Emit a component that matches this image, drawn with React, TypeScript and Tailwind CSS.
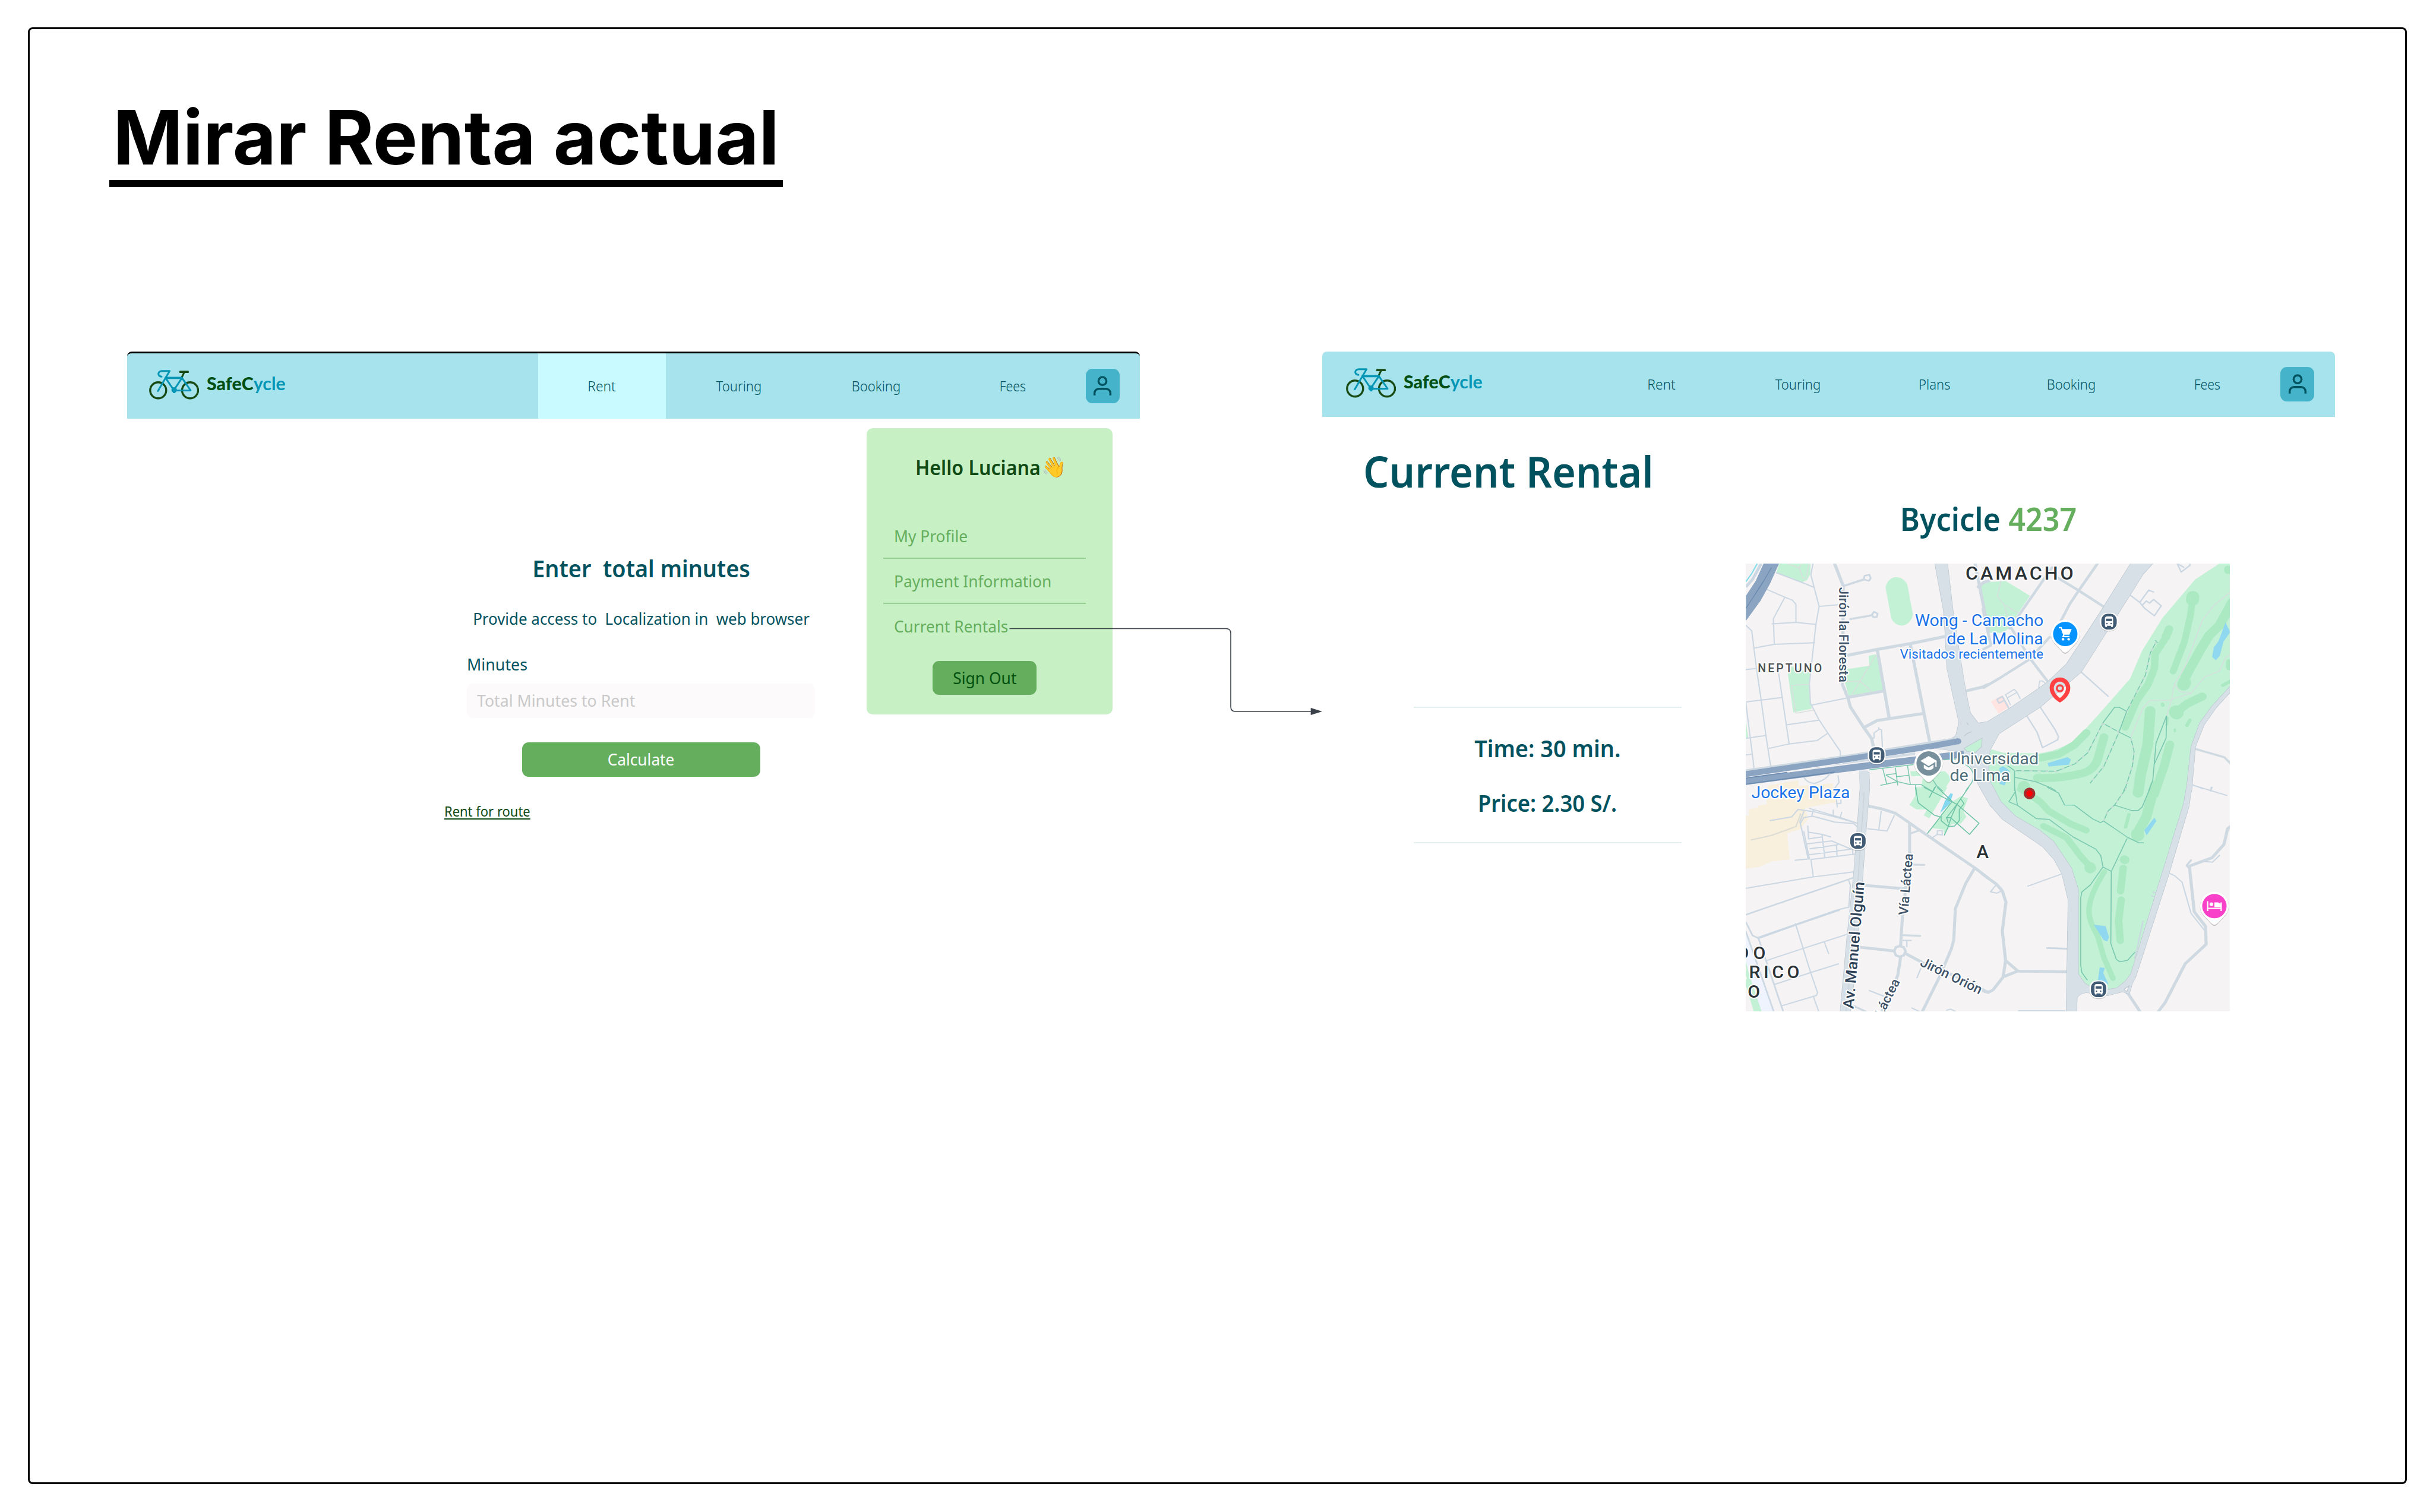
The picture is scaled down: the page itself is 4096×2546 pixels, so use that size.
import type { ReactNode } from 'react';

/* ---------- Brand & navigation ---------- */

function BikeLogo() {
  return (
    <svg viewBox="0 0 84.5 50" className="h-[50px] w-[84.5px] shrink-0" fill="none" strokeLinecap="round" strokeLinejoin="round">
      <g stroke="#184a14" strokeWidth="3.4">
        <circle cx="15.3" cy="34.3" r="13.5" />
        <circle cx="69" cy="34.3" r="13.5" />
        <path d="M59.3 3.5 54.8 13" strokeWidth="3" />
        <path d="M52.5 3.2H65.3" strokeWidth="3.8" />
      </g>
      <g stroke="#0596b5" strokeWidth="3">
        <path d="M14.8 35.4 27.8 13.2 34.6 1.8H21.5C16 1.8 14.4 7 17 9.6c1 1 2.6 1.6 4 1.6" />
        <path d="M27.8 13.4H55.4L70 34.5H42L27.8 13.4M55.4 13.4 42.3 33" />
        <path d="M27.8 13.4H55.4" strokeWidth="3.6" />
      </g>
      <circle cx="42.2" cy="33.6" r="4.6" fill="#0596b5" />
      <path d="M40.4 36h3.8v3h-3.8z" fill="#0596b5" />
    </svg>
  );
}

function Brand({ className }: { className: string }) {
  return (
    <div className={`flex items-center ${className}`}>
      <BikeLogo />
      <span className="mb-[5px] ml-[13px] origin-left scale-x-[0.98] font-['Lato'] text-[31px] leading-none font-black whitespace-nowrap text-[#014f12]">
        SafeC<span className="font-bold text-[#0596b5]">ycle</span>
      </span>
    </div>
  );
}

function ProfileButton() {
  return (
    <button className="ml-[15px] grid h-[58px] w-[57.5px] shrink-0 place-items-center self-center rounded-[11px] bg-[#45b3ca]">
      <svg viewBox="0 0 24 24" className="h-10 w-10" fill="none" stroke="#00525f" strokeWidth="2.1">
        <path d="M20 21.5v-2.4a4.2 4.2 0 0 0-4.2-4.2H8.2A4.2 4.2 0 0 0 4 19.1v2.4" />
        <circle cx="12" cy="7" r="4" />
      </svg>
    </button>
  );
}

function NavItem({ label, active, scale }: { label: string; active?: boolean; scale: string }) {
  return (
    <a className={`flex w-[215px] shrink-0 items-center justify-center text-[23px] font-[350] text-[#00525f] ${active ? 'bg-[#c8faff]' : ''}`}>
      <span className={scale}>{label}</span>
    </a>
  );
}

/* ---------- City map ---------- */

const quads = {
  tl: 'translate(-15.6 -13) scale(.4209 .3954)',
  tr: 'translate(634.4 -13) scale(.4337 .3954)',
  bl: 'translate(-15.6 597) scale(.4209 .3954)',
  br: 'translate(634.4 597) scale(.4337 .3954)',
};
type Quad = keyof typeof quads;
type Area = [Quad, string, string];
type Line = [Quad, number, string, string?];

const PARK = '#c3f1d5';
const FAIRWAY = '#abe9c3';
const WATER = '#8fd8ef';
const SAND = '#f8efdc';

const areas: Area[] = [
  ['tl', PARK, 'M248 33L448 33L447 100L425 145L395 158L232 95Z'],
  ['tl', PARK, 'M923 195C930 150 960 124 990 124C1025 126 1055 150 1063 185L1096 375C1090 420 1060 452 1022 452C985 447 962 420 957 390Z'],
  ['tl', PARK, 'M1572 158L1545 165L1520 190L1560 355L1572 400Z'],
  ['tl', PARK, 'M303 770L320 725L447 770L438 900L447 975L455 1012L338 1038Z'],
  ['tl', PARK, 'M680 745L820 722L815 655L862 645L880 700L910 885L690 925L665 835Z'],
  ['tl', PARK, 'M38 1095L52 1205L38 1210Z'],
  ['tl', SAND, 'M165 1580L180 1530L370 1495L370 1535L590 1515L590 1580Z'],
  ['tl', PARK, 'M1080 1435L1300 1435L1335 1475L1330 1500L1290 1568L1150 1568L1155 1500L1165 1468L1085 1468Z'],
  ['tr', PARK, 'M0 160L135 150L285 250L205 380L165 460L120 500L35 500L0 340Z'],
  ['tr', '#ffe4e1', 'M45 965L115 920L160 1000L92 1045Z'],
  ['tr', PARK, 'M1450 33L1520 33L1520 870L1400 1005L1335 1120L1275 1280L1255 1570L60 1570L20 1450L20 1380L45 1285L120 1310L340 1315Q480 1290 570 1215L700 1060L900 810L975 620L1100 400L1300 140Z'],
  ['bl', SAND, 'M38 190L55 195L55 150L115 135L120 122L170 115L168 -2H600L610 100L410 140L435 210L380 285L300 310L315 485L200 500L130 535L38 550Z'],
  ['bl', '#eff3fe', 'M38 985L215 1520H140L38 1180Z'],
  ['bl', PARK, 'M38 1175L55 1250L140 1520H90L38 1340Z'],
  ['bl', PARK, 'M1110 0L1315 0L1200 210L1165 190L1185 150L1120 150L1075 120L1110 60Z'],
  ['bl', PARK, 'M1270 190L1340 100L1400 60L1445 75L1415 160L1435 200L1400 245L1340 250L1295 320L1290 285L1215 275Z'],
  ['bl', '#83d8f0', 'M1335 40L1350 45L1330 110L1268 175L1300 90Z'],
  ['br', PARK, 'M50 -2H1258L1240 110L915 1265L875 1315L820 1362L760 1375L610 1325L572 1260V690L530 545L420 365L335 290L185 195L95 95Z'],
];

const fairways: Line[] = [
  ['tr', 80, 'M1286 258L1284 278'], ['tr', 42, 'M1285 270L1272 380L1235 560L1165 760'],
  ['tr', 60, 'M1530 290L1450 450L1385 520L1330 620L1240 800'], ['tr', 80, 'M1235 835L1230 850'],
  ['tr', 52, 'M1140 475L1120 530'], ['tr', 46, 'M1110 550L1055 640L1050 740L1010 850L940 960L870 1138'],
  ['tr', 66, 'M1024 1028L1010 1250L965 1460L950 1580'], ['tr', 54, 'M1345 930L1250 980L1185 1035'],
  ['tr', 88, 'M1184 1034L1186 1040'], ['tr', 54, 'M740 1205L710 1320Q690 1430 600 1450Q480 1485 330 1480'],
  ['tr', 50, 'M632 1175L560 1255L460 1320L345 1345'], ['tr', 54, 'M1145 1255L1110 1400L1050 1590'],
  ['tr', 46, 'M1502 70L1502 80'], ['tr', 48, 'M1514 700V730'], ['tr', 76, 'M248 1538L248 1540'],
  ['tr', 22, 'M1100 982L1102 988'], ['tr', 22, 'M1268 1090L1250 1125'], ['tr', 22, 'M1470 855L1514 828'],
  ['tr', 14, 'M1176 1152V1164'], ['tr', 14, 'M1132 1075L1128 1120'],
  ['br', 44, 'M228 12L300 60L350 100L400 160L540 250L630 290'], ['br', 42, 'M368 262L510 340L600 470L650 530'],
  ['br', 70, 'M654 540L656 546'], ['br', 34, 'M742 570Q650 730 648 830Q645 900 700 1000L740 1150L795 1290'],
  ['br', 46, 'M858 545L842 700M846 760L830 900L840 1035'], ['br', 58, 'M866 488L868 490'],
  ['br', 62, 'M1052 -10L1000 200L950 300'], ['br', 80, 'M946 315L948 325'], ['br', 50, 'M950 0L942 38'],
  ['br', 22, 'M893 184L873 268'],
];

const waters: Area[] = [
  ['tr', WATER, 'M1487 430L1516 495L1475 560L1452 655L1428 685L1405 662L1415 600L1445 555Z'],
  ['tr', WATER, 'M393 1380L515 1340L537 1355L525 1390L400 1403Z'],
  ['tr', WATER, 'M95 1415L120 1400L160 1430L155 1460L130 1530L97 1520L110 1480Z'],
  ['br', WATER, 'M1050 205L1062 228L1002 325L988 290Z'],
  ['br', WATER, 'M677 927L750 937L771 1012L760 1040L737 1030Z'],
  ['br', WATER, 'M714 1215L746 1220L735 1252L768 1330L703 1300Z'],
];

const paths: Line[] = [
  ['tl', 6, 'M300 33L375 62L400 132H420L437 33M375 62L390 33', '#d8dfdd'],
  ['tl', 6, 'M440 848L327 855L352 1035L360 1042L465 1022', '#d8dfdd'],
  ['tl', 6, 'M862 650L708 920M670 830L762 828L840 900', '#d8dfdd'],
  ['tr', 6, 'M105 150L85 255L125 310L145 385M125 310L220 370', '#d5dfde'],
  ['tr', 6, 'M1514 228L1415 315L1345 415L1240 725L1172 848L1210 898L1275 908L1360 798L1450 758L1488 665L1520 645M1172 848L1155 950L1125 1060M1155 950L1275 908M1155 955L1020 958L980 1005L905 1205', '#d5dfde'],
  ['tr', 6, 'M1062 560L1025 635L995 785L880 1030L832 1170L740 1400L655 1515M1055 550L1070 568', '#7bc8b0'],
  ['tr', 6, 'M880 1030L835 1003H805L732 1110L832 1170L905 1210L925 1300L915 1400L875 1535L860 1568', '#7bc8b0'],
  ['tr', 6, 'M732 1110L640 1310L560 1385L445 1435L190 1430L140 1390M190 1430V1568M190 1475L320 1505L410 1545L445 1568', '#7bc8b0'],
  ['tr', 6, 'M1125 1060L1060 1245L1040 1495L1015 1568M1125 1060L1122 1210L1048 1390', '#7bc8b0'],
  ['tl', 6, 'M820 1425L1100 1390M1290 1358L1370 1352M1430 1390Q1500 1430 1470 1510L1430 1568', '#7bc8b0'],
  ['tl', 6, 'M905 1415L930 1520M985 1410L1000 1530M1062 1395L1080 1525M925 1460L990 1450M990 1472L1068 1462M925 1460L1000 1505L1080 1525H1150L1215 1568M890 1530L1000 1505M1112 1525L1118 1568M1215 1480L1245 1530L1285 1568M1245 1530L1225 1568', '#7bc8b0'],
  ['bl', 6, 'M1112 0L1130 105L1235 190L1270 200L1188 312M1165 0L1375 115L1515 243L1455 318L1335 205M1235 0L1200 70M1250 0L1345 95L1275 190V225L1320 265L1360 262L1390 225V150L1420 110L1400 80M1450 0L1375 115L1340 200L1320 265L1295 325M1305 205H1340M1375 115L1310 205L1320 240', '#6cc3a5'],
  ['br', 6, 'M190 0L195 30L155 98L208 122L195 30M208 122L325 212L403 217L550 335L690 418L720 460L734 538L785 568L882 345M734 538L655 660L605 705L597 745V1200L604 1250L638 1302M785 568L782 1055L815 1160L837 1178L885 1168L932 1110', '#7bc8b0'],
  ['br', 6, 'M390 0L460 38L498 120L558 121L670 213L718 238L738 228L885 338L955 375H985', '#7bc8b0'],
  ['br', 6, 'M738 228L765 160L805 120L880 0M805 120L910 157H950L975 133L1025 0', '#7bc8b0'],
];

const dashes: Line[] = [
  ['tr', 6, 'M1062 560L1025 635L995 785L880 1030M832 1170L740 1400L655 1515'],
  ['tr', 6, 'M732 1110L640 1310L560 1385L445 1435L190 1430M732 1110L832 1170'],
  ['tr', 6, 'M905 1210L925 1300L915 1400L875 1535'],
  ['br', 6, 'M738 228L765 160L805 120L880 0'],
];

const STREET = '#cbd7e2';
const streets: Line[] = [
  ['tl', 8, 'M232 95L388 158L467 192M463 33L450 110L502 322L482 440L440 845L447 975L500 1085L556 1175L636 1300V1335M502 322L625 310'],
  ['tl', 8, 'M172 208L285 260L333 280L355 308V430M285 260L212 405L218 578M205 440L355 430L480 443M95 602L218 578L472 567'],
  ['tl', 8, 'M38 450L75 487L105 740L135 955L165 1195L195 1400M38 748L105 740M245 770L268 935L312 1250M38 967L268 937'],
  ['tl', 8, 'M302 1120L500 1090M185 1280L312 1250L490 1227L556 1178M38 1212L162 1193M38 975L90 1415M38 1325L72 1320'],
  ['tl', 8, 'M455 988L680 940M835 1215L850 1210V1175L885 1150L897 1155L903 1270M880 1140V1155M622 1465L628 1510L600 1550'],
  ['tl', 11, 'M785 140L790 115L820 108L829 130L818 149Z'],
  ['tl', 11, 'M838 375L850 358L872 370L868 392L845 395Z'],
  ['tl', 14, 'M655 185L785 140M700 408L835 382'],
  ['tl', 20, 'M600 33L655 185L650 850L685 940L700 1000L785 1140L835 1215L845 1265'],
  ['tl', 20, 'M680 652L870 612L1085 572L1300 525M870 612L945 1070M1080 580L1205 1250M690 935L910 893M785 1140L870 1092L1160 1045'],
  ['tl', 20, 'M1430 893L1540 865L1570 850M1490 33L1575 490M1510 190L1545 160L1575 150'],
  ['tr', 17, 'M700 33L585 215L530 305L475 420M450 125L585 215L740 325M420 60L205 400L160 470M405 530L330 620L280 680L100 805L0 870'],
  ['tr', 17, 'M290 680L395 830M165 460L290 680M0 610L45 585L-5 340M0 158L35 148'],
  ['tr', 9, 'M600 765L765 928M900 245L960 295L1015 212L1045 225M960 295L990 335L1050 385L1092 318L1045 275L1020 300L1000 285L975 315M1190 33L1215 90L1268 45V33M1195 35L1230 58M265 1060L328 1170L362 1275L455 1222L460 1200L440 1155L350 1005'],
  ['tr', 7, 'M338 870L345 825H362L378 840M135 918L188 882L205 900L225 945M145 940L200 905M135 918L165 985'],
  ['tr', 10, 'M155 1010L115 930L82 950L95 975L120 960'],
  ['tr', 14, 'M1305 1285L1480 1340L1520 1385'],
  ['tr', 8, 'M1280 1525L1345 1550M1400 1543L1395 1568'],
  ['bl', 8, 'M192 225L328 200L368 150L470 165L620 205L750 245M442 143L640 205L750 245M465 155L455 195M405 165L380 230L432 480H440L405 300M460 195L405 205L385 240M460 195L600 235L720 245L748 270'],
  ['bl', 8, 'M72 355L200 325L355 265L385 180', '#dcdcd6'],
  ['bl', 8, 'M350 492L440 483M430 262L435 348L520 335M435 303L520 318L575 335M520 318L538 475M425 382L582 362L710 420M445 415L620 388M440 455L700 418M612 388L615 462M450 487L735 450M715 420V450'],
  ['bl', 8, 'M450 487L465 605M38 682L465 605L725 570M690 630L700 660L690 810L665 815L610 830L110 1015M630 830L355 930L120 1020M352 920L445 1240L492 1385L485 1405L265 1475M465 1410L500 1515'],
  ['bl', 10, 'M38 860L720 610M38 910L80 1000L110 1015L118 1020L275 1515M38 975L215 1515'],
  ['bl', 8, 'M172 1168L400 1088L680 992M535 1045L562 1122M222 1330L450 1250L625 1192M592 155V185M645 170L635 205M612 85L617 132M612 108H640V85'],
  ['bl', 19, 'M820 128L895 145L985 175L1075 240L1140 290L1490 545L1575 615M1075 240V450M1078 440L1030 870L1018 1070M795 662L1045 685M1485 550L1430 650L1365 820L1355 1030L1340 1090L1260 1290L1155 1515'],
  ['bl', 19, 'M765 1080L980 1105M1055 1125L1160 1185L1400 1290L1575 1385M1018 1150L1000 1270L900 1515'],
  ['bl', 13, 'M1085 310L1140 290M1100 522L1168 524M1035 998L1142 1003M720 1475L800 1515'],
  ['bl', 8, 'M1035 1033H1085M1058 1035V1075M820 1372L912 1410M1145 1225L1122 1285M895 165L880 285M810 280L932 295L978 190M1220 340L1250 318L1252 293H1282V322L1250 318M1090 1490L1140 1515M1310 1505L1335 1497L1370 1515'],
  ['br', 8, 'M272 667L480 585M72 665L42 705L80 715L105 702M215 1508H500M1330 0L1495 55M1405 0L1398 20M1140 580L1175 597L1220 640L1275 850L1365 975M1350 500L1408 505L1450 460M980 905L930 1155M1040 708L1062 715M1033 732L1055 742'],
  ['br', 12, 'M390 1085L515 1090M1275 492L1248 528L1262 545'],
  ['br', 19, 'M-5 587L80 655L115 700L137 775L115 970L135 1170L120 1280L60 1365Q25 1395 -5 1372M135 1170L210 1240L515 1245M210 1240L120 1280'],
  ['br', 19, 'M1520 262L1500 280L1478 385L1405 475L1265 532L1295 840L1365 940L1368 1060L1240 1190L1115 1455L1070 1520M860 1365L890 1395L965 1520'],
];

const avenues: [Quad, string][] = [
  ['tl', 'M1235 30L1315 30L1350 350L1380 560L1430 890L1460 1040L1510 1110L1575 1100L1575 1640L1480 1430L1440 1360L1380 1300L1240 1280L1330 1220L1368 1195L1388 1105L1312 740L1300 500L1290 350Z'],
  ['tr', 'M905 30L1042 30L980 105L900 245L600 765L520 840L350 1000L95 1180L40 1290L25 1380L30 1500L62 1575L-8 1575L-8 1107L20 1102L160 1010L385 840L510 710L735 330Z'],
  ['tr', 'M1525 850L1400 1000L1328 1110L1275 1270L1245 1575L1278 1575L1302 1270L1355 1122L1430 1005L1525 890Z'],
  ['bl', 'M758 -100L818 -100L822 0L800 280L770 720L735 1200L700 1520H635L680 1000L720 600L745 250L762 0Z'],
  ['bl', 'M1500 -40L1590 -40L1590 130L1520 0Z'],
  ['br', 'M-8 -20L50 -20L60 0L105 95L195 195L345 290L430 365L540 545L582 690L582 1260L620 1320L655 1345L765 1365L820 1355L870 1310L905 1260L1055 730L1230 110L1248 -5L1280 -5L1262 130L1135 600L935 1280L915 1320L895 1395L855 1380L765 1405L630 1385Q585 1395 575 1420L570 1520H508L520 760L482 585L435 490L362 400L115 215L40 120L-8 5Z'],
];

const each = (q: Quad, i: number, node: ReactNode) => (
  <g key={i} transform={quads[q]}>
    {node}
  </g>
);

function BusStop({ x, y }: { x: number; y: number }) {
  return (
    <g transform={`translate(${x} ${y})`}>
      <rect x="-24" y="-22" width="48" height="48" rx="21" fill="#00000030" />
      <rect x="-24" y="-24" width="48" height="48" rx="20" fill="#fff" />
      <rect x="-20.5" y="-21" width="41" height="42" rx="17" fill="#405b73" />
      <path d="M-11 -8q0-6 6-6H5q6 0 6 6V10q0 1-1 1v3H5.500v-3h-11v3H-10v-3q-1 0-1-1Z" fill="#fff" />
      <path d="M-8 -8H8V-1.500H-8Z" fill="#405b73" />
      <circle cx="-5.500" cy="5" r="2" fill="#405b73" />
      <circle cx="5.500" cy="5" r="2" fill="#405b73" />
    </g>
  );
}

function Pin({ x, y, color, children }: { x: number; y: number; color: string; children: ReactNode }) {
  return (
    <g transform={`translate(${x} ${y})`}>
      <path d="M0 53C-4 53-8 49-12 44L-31 24A38.500 38.500 0 1 1 31 24L12 44C8 49 4 53 0 53Z" fill="#00000030" />
      <path d="M0 50C-4 50-8 46-12 42L-31 22A38 38 0 1 1 31 22L12 42C8 46 4 50 0 50Z" fill="#fff" />
      <circle r="32.500" fill={color} />
      {children}
    </g>
  );
}

interface LabelProps {
  x: number;
  y: number;
  w: number;
  size: number;
  color: string;
  turn?: number;
  weight?: number;
  spaced?: boolean;
  children: string;
}

function Label({ x, y, w, size, color, turn = 0, weight = 400, spaced, children }: LabelProps) {
  return (
    <text
      transform={`translate(${x} ${y}) rotate(${turn})`}
      textLength={w}
      lengthAdjust={spaced ? 'spacing' : 'spacingAndGlyphs'}
      fontSize={size}
      fontWeight={weight}
      fill={color}
      stroke="#fff"
      strokeWidth="6"
      strokeLinejoin="round"
      paintOrder="stroke"
    >
      {children}
    </text>
  );
}

function CityMap() {
  return (
    <svg viewBox="0 0 1291 1195" preserveAspectRatio="none" className="mt-[41px] block h-[754px] w-[815px] bg-[#f5f3f3] font-['Roboto']">
      {areas.map(([q, c, d], i) => each(q, i, <path d={d} fill={c} />))}
      <g fill="none" stroke={FAIRWAY} strokeLinecap="round" strokeLinejoin="round">
        {fairways.map(([q, w, d], i) => each(q, i, <path d={d} strokeWidth={w} />))}
      </g>
      {waters.map(([q, c, d], i) => each(q, i, <path d={d} fill={c} />))}
      <g fill="none" strokeLinecap="round" strokeLinejoin="round">
        {streets.map(([q, w, d, c], i) => each(q, i, <path d={d} strokeWidth={w} stroke={c ?? (w > 12 ? '#cfd9e2' : STREET)} />))}
      </g>
      <g stroke="#bcc8d2" strokeWidth="5">
        {avenues.map(([q, d], i) => each(q, i, <path d={d} />))}
      </g>
      <g fill="#d7dfe7">
        {avenues.map(([q, d], i) => each(q, i, <path d={d} />))}
      </g>
      <g transform={quads.bl} fill="none" stroke="#c9d3dc" strokeWidth="5">
        <path d="M790 0L770 300L742 720L705 1200L672 1515" />
      </g>
      <g transform={quads.br}>
        <path d="M862 1364L895 1340L880 1380Z" fill="#f5f3f3" stroke="#bcc8d2" strokeWidth="4" />
      </g>
      <g transform={quads.bl} fill="#f5f3f3" stroke="#cfd9e2" strokeWidth="16">
        <path d="M988 1080L1013 1072L1038 1080L1050 1107L1038 1134L1013 1144L988 1134L978 1107Z" />
      </g>
      <g transform={quads.tl}>
        <path d="M1420 1280L1535 1210L1530 1270L1490 1310L1440 1300Z" fill={PARK} stroke="#bcc8d2" strokeWidth="4" />
        <path d="M1420 1198Q1440 1175 1470 1168M1438 1105L1448 1122" fill="none" stroke="#bcc8d2" strokeWidth="5" />
        <path d="M135 33L80 140L38 190" fill="none" stroke={STREET} strokeWidth="18" />
        <path d="M110 33L75 100L38 155" fill="none" stroke="#83ddeb" strokeWidth="8" />
        <path d="M150 33L248 33L190 170L130 285L38 420L38 250L100 150Z" fill="#8ba4c1" />
        <path d="M200 60L140 170L38 335M150 150L90 250" fill="none" stroke="#6a8ab0" strokeWidth="5" />
        <path d="M30 1445L700 1342L1200 1256L1385 1226" fill="none" stroke="#cfd9e2" strokeWidth="44" />
        <path d="M30 1505L600 1425L820 1395L1420 1318" fill="none" stroke="#8ba4c1" strokeWidth="46" />
        <path d="M30 1455L700 1350L1200 1268L1383 1232" fill="none" stroke="#8ba4c1" strokeWidth="40" />
        <circle cx="1383" cy="1232" r="20" fill="#8ba4c1" />
        <path d="M38 1480L300 1442M38 1522L600 1440" fill="none" stroke="#6a8ab0" strokeWidth="7" />
        <path d="M412 1420L800 1368L1110 1325L1110 1308L800 1352L500 1412Z" fill="#d3dce5" />
        <path d="M755 1430H812L820 1575H765Z" fill="#d7dfe7" />
        <path d="M405 1475Q430 1520 480 1515Q550 1490 570 1450" fill="none" stroke={STREET} strokeWidth="8" />
      </g>
      <g fill="none" strokeLinejoin="round">
        {paths.map(([q, w, d, c], i) => each(q, i, <path d={d} strokeWidth={w} stroke={c} />))}
        {dashes.map(([q, w, d], i) => each(q, i, <path d={d} strokeWidth={w} stroke="#cfdcd8" strokeDasharray="18 32" />))}
      </g>

      <Label x={586} y={43} w={288} size={51} weight={500} spaced color="#2b3235">CAMACHO</Label>
      <Label x={451} y={166} w={343} size={44} color="#1a73e8">Wong - Camacho</Label>
      <Label x={536} y={216} w={257} size={44} color="#1a73e8">de La Molina</Label>
      <Label x={411} y={253} w={383} size={34} color="#1a73e8">Visitados recientemente</Label>
      <Label x={32} y={289.500} w={171} size={31} weight={500} spaced color="#4a4f52">NEPTUNO</Label>
      <Label x={249} y={63} w={254} size={34} weight={500} color="#3f5368" turn={90}>Jirón la Floresta</Label>
      <Label x={544} y={535} w={237} size={44} color="#4f6e7a">Universidad</Label>
      <Label x={544} y={580} w={161} size={44} color="#4f6e7a">de Lima</Label>
      <Label x={15} y={625.500} w={263} size={45} color="#1a73e8">Jockey Plaza</Label>
      <Label x={-23} y={1055} w={76} size={48} weight={500} spaced color="#2b3235">DO</Label>
      <Label x={-30} y={1107} w={173} size={48} weight={500} spaced color="#2b3235">RRICO</Label>
      <Label x={5} y={1159} w={35} size={48} weight={500} spaced color="#2b3235">O</Label>
      <Label x={615} y={785.500} w={33} size={49} weight={500} color="#2b3235">A</Label>
      <Label x={287} y={1189} w={340} size={40} weight={500} color="#2f4358" turn={-85}>Av. Manuel Olguín</Label>
      <Label x={432} y={939} w={165} size={35} weight={500} color="#3f5368" turn={-85.200}>Vía Láctea</Label>
      <Label x={338} y={1263} w={165} size={35} weight={500} color="#3f5368" turn={-63.400}>Vía Láctea</Label>
      <Label x={463} y={1072} w={178} size={36} weight={500} color="#3f5368" turn={26}>Jirón Orión</Label>

      <BusStop x={349.300} y={511} />
      <BusStop x={299.200} y={740.500} />
      <BusStop x={968.800} y={155} />
      <BusStop x={941} y={1136} />
      <Pin x={487.800} y={533.400} color="#78909c">
        <path d="M0 -20L22 -7L0 7L-22 -7Z" fill="#fff" />
        <path d="M-13 3V12Q0 24 13 12V3L0 11Z" fill="#fff" />
        <path d="M19.500 -7V9" stroke="#fff" strokeWidth="3.500" />
      </Pin>
      <Pin x={852.100} y={187.900} color="#0593ff">
        <path d="M-17 -17H-11L-4 2L-6 7H11" fill="none" stroke="#fff" strokeWidth="3.500" />
        <path d="M-9 -13H17L11 2H-3Z" fill="#fff" />
        <circle cx="-6" cy="14" r="3.500" fill="#fff" />
        <circle cx="9" cy="14" r="3.500" fill="#fff" />
      </Pin>
      <Pin x={1249.800} y={914} color="#f940c8">
        <path d="M-18 -13V13M18 -10V13M-18 6H18" fill="none" stroke="#fff" strokeWidth="3.500" />
        <circle cx="-8" cy="-5" r="5" fill="#fff" />
        <path d="M0 -10H10Q16 -8 18 -3V3H0Z" fill="#fff" />
      </Pin>
      <path d="M837.800 304C822 304 810.500 316 810.500 332C810.500 350 826 364 837.800 371C850 364 865.500 350 865.500 332C865.500 316 853 304 837.800 304ZM837.800 315C847 315 854 323 854 333C854 343 846 353 837.800 359C830 353 821.500 343 821.500 333C821.500 323 829 315 837.800 315Z" fill="#ff4144" fillRule="evenodd" />
      <circle cx="837.800" cy="333" r="8" fill="none" stroke="#ff4144" strokeWidth="5.500" />
      <circle cx="756.700" cy="613.500" r="15.500" fill="#a32c2c" />
      <circle cx="756.700" cy="613.500" r="8.500" fill="#ff0000" />
    </svg>
  );
}

/* ---------- Screens ---------- */

function AccountMenu() {
  const row = 'block h-[76px] pl-[18px] text-[27.5px] leading-[76px] whitespace-nowrap text-[#65ae5d]';
  return (
    <div className="absolute top-[129px] left-[1245px] h-[482px] w-[414px] rounded-[10px] bg-[#c8f0c5] pt-[42px]">
      <div className="flex h-12 items-center pl-[82px] text-[34px] font-semibold whitespace-nowrap text-[#0f4a14]">
        <span className="w-[212px] origin-left scale-x-[0.945]">Hello Luciana</span>
        <span className="mb-[5px] text-[34px] leading-none">👋</span>
      </div>
      <ul className="mt-[54px] ml-[28px] w-[341px]">
        <li className={`${row} border-b-2 border-[#96d090]`}><span className="inline-block origin-left scale-x-[0.96]">My Profile</span></li>
        <li className={`${row} border-b-2 border-[#96d090]`}><span className="inline-block origin-left scale-x-[0.958]">Payment Information</span></li>
        <li className={row}><span className="inline-block origin-left scale-x-[0.955]">Current Rentals</span></li>
      </ul>
      <button className="mt-5 ml-[111px] flex h-[57px] w-[175px] items-center justify-center rounded-[11px] bg-[#65ae5d] text-[27.5px] whitespace-nowrap text-[#00500f]">
        <span className="scale-x-[0.96]">Sign Out</span>
      </button>
    </div>
  );
}

function RentScreen() {
  return (
    <section className="relative w-[1705px] text-[#00525f]">
      <nav className="flex h-[113px] overflow-hidden rounded-t-[8px] border-t-[3px] border-black bg-[#a7e3ed]">
        <div className="flex w-[692px] shrink-0">
          <Brand className="mb-[4px] ml-[36.500px]" />
        </div>
        <div className="flex gap-[15.500px]">
          <NavItem label="Rent" active scale="scale-x-[0.99]" />
          <NavItem label="Touring" scale="scale-x-[0.96]" />
          <NavItem label="Booking" scale="scale-x-[0.96]" />
          <NavItem label="Fees" scale="scale-x-[0.93]" />
        </div>
        <ProfileButton />
      </nav>
      <form className="mt-[227px] ml-[572px] flex w-[586px] flex-col items-center text-[27.5px] leading-[40px] whitespace-nowrap">
        <h2 className="ml-[2px] scale-x-[0.957] text-[39.5px] leading-[50px] font-semibold">Enter{'\u00a0 '}total minutes</h2>
        <p className="mt-10 scale-x-[0.943]">Provide access to{'\u00a0 '}Localization in{'\u00a0 '}web browser</p>
        <label className="mt-[37px] origin-left scale-x-[0.975] self-start">Minutes</label>
        <div className="mt-[12px] flex h-[58px] w-[586px] items-center rounded-[10px] bg-[#fcfafb] pl-[17px] text-[#c9c9c9]">
          <span className="origin-left scale-x-[0.97]">Total Minutes to Rent</span>
        </div>
        <button type="button" className="mt-[41px] flex h-[58px] w-[401px] items-center justify-center rounded-[11px] bg-[#65ae5d] text-white">
          <span className="scale-x-[0.955]">Calculate</span>
        </button>
        <a className="mt-[42px] ml-[-38px] origin-left scale-x-[0.955] self-start text-[23px] leading-[32px] text-[#0f4a14] underline decoration-[1.5px] underline-offset-[3px]">Rent for route</a>
      </form>
      <AccountMenu />
    </section>
  );
}

function RentalScreen() {
  return (
    <section className="w-[1705px] text-[#00525f]">
      <nav className="flex h-[110px] rounded-t-[8px] bg-[#a7e3ed]">
        <div className="flex w-[464px] shrink-0">
          <Brand className="mb-[5px] ml-[39.500px]" />
        </div>
        <div className="flex gap-[14.700px]">
          <NavItem label="Rent" scale="scale-x-[0.99]" />
          <NavItem label="Touring" scale="scale-x-[0.96]" />
          <NavItem label="Plans" scale="scale-x-[0.96]" />
          <NavItem label="Booking" scale="scale-x-[0.96]" />
          <NavItem label="Fees" scale="scale-x-[0.93]" />
        </div>
        <ProfileButton />
      </nav>
      <div className="flex font-semibold whitespace-nowrap">
        <div className="w-[713px] shrink-0 pt-[46px]">
          <h1 className="ml-[69px] w-[519px] origin-left scale-x-[0.942] text-[72.5px] leading-[90px]">Current Rental</h1>
          <div className="mt-[352px] ml-[154px] flex h-[230px] w-[451px] flex-col items-center gap-[42px] border-y-2 border-[#e6f0f1] pt-[43px] text-[39.5px] leading-[50px]">
            <p className="scale-x-[0.96]">Time: 30 min.</p>
            <p className="scale-x-[0.922]">Price: 2.30 S/.</p>
          </div>
        </div>
        <div className="flex w-[815px] flex-col items-center pt-[136px]">
          <h2 className="ml-[2px] scale-x-[0.932] text-[54px] leading-[70px]">
            Bycicle <span className="text-[#65ae5d]">4237</span>
          </h2>
          <CityMap />
        </div>
      </div>
    </section>
  );
}

export default function App() {
  return (
    <div className="h-[2546px] w-[4096px] overflow-hidden bg-white pt-[46px] pl-[47px] font-['Noto_Sans',sans-serif]">
      <main className="h-[2453px] w-[4005px] rounded-[8px] border-3 border-black">
        <header className="mt-[107px] ml-[134px] w-[1134px]">
          <h1 className="h-[147px] text-center font-['Inter'] text-[126.3px] leading-[150px] font-bold whitespace-nowrap text-black">Mirar Renta actual</h1>
          <div className="h-[12px] bg-black" />
        </header>
        <div className="relative mt-[277px] ml-[164px] flex gap-[307px]">
          <RentScreen />
          <RentalScreen />
          <svg viewBox="0 0 540 160" className="absolute top-[460px] left-[1480px] h-[160px] w-[540px]" fill="none" stroke="#3a414a" strokeWidth="1.600">
            <path d="M5.500 6.500H370Q378 6.500 378 14.500V138Q378 146 386 146H514" />
            <path d="M512.700 140L532 146L512.700 152Z" fill="#3a414a" stroke="none" />
          </svg>
        </div>
      </main>
    </div>
  );
}
